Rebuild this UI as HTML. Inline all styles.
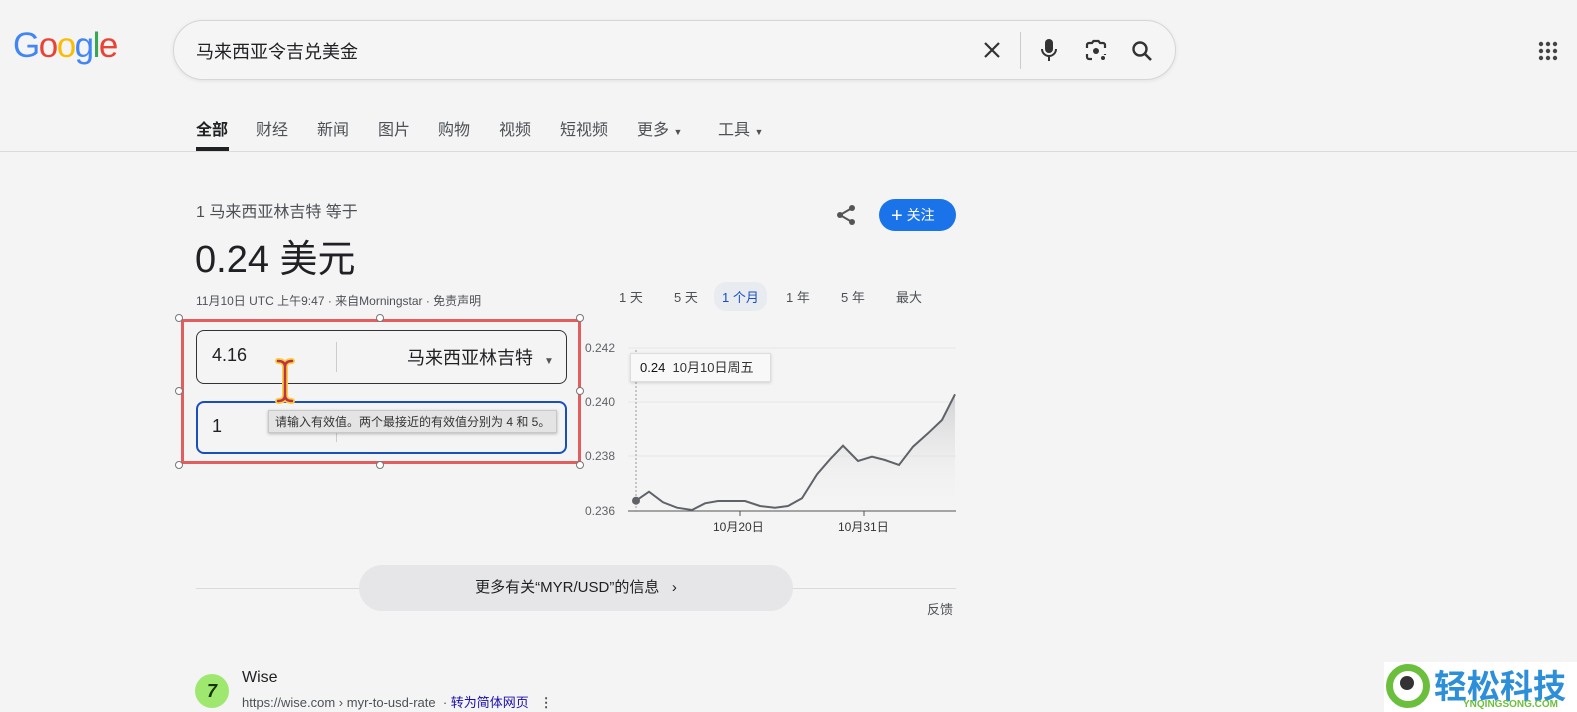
<!DOCTYPE html>
<html><head><meta charset="utf-8"><style>
*{margin:0;padding:0;box-sizing:border-box}
body{width:1577px;height:712px;background:#f4f4f4;font-family:"Liberation Sans","Noto Sans CJK SC",sans-serif;color:#202124;position:relative;overflow:hidden}
.a{position:absolute;white-space:nowrap}
</style></head><body>
<div class="a" style="left:13px;top:26px;font-size:35px;letter-spacing:-1.5px;font-weight:400"><span style="color:#4285f4">G</span><span style="color:#ea4335">o</span><span style="color:#fbbc05">o</span><span style="color:#4285f4">g</span><span style="color:#34a853">l</span><span style="color:#ea4335">e</span></div>
<div class="a" style="left:173px;top:20px;width:1003px;height:60px;border:1px solid #d6d6d6;border-radius:30px;background:#f5f5f5;box-shadow:0 1px 4px rgba(0,0,0,.08)"></div>
<div class="a" style="left:196px;top:38px;font-size:18px;color:#202124">马来西亚令吉兑美金</div>
<svg class="a" style="left:982px;top:40px" width="20" height="20" viewBox="0 0 20 20"><path d="M3 3L17 17M17 3L3 17" stroke="#333" stroke-width="2.2"/></svg>
<div class="a" style="left:1020px;top:32px;width:1px;height:37px;background:#ccc"></div>
<svg class="a" style="left:1038px;top:37px" width="22" height="26" viewBox="0 0 22 26"><rect x="7" y="2" width="8" height="14" rx="4" fill="#333"/><path d="M4 12a7 7 0 0 0 14 0M11 19v5" stroke="#333" stroke-width="2" fill="none"/></svg>
<svg class="a" style="left:1084px;top:39px" width="24" height="24" viewBox="0 0 24 24"><path d="M3 9V6a2 2 0 0 1 2-2h3l1.5-2h5L16 4h3a2 2 0 0 1 2 2v3M3 15v3a2 2 0 0 0 2 2h3M21 15v1" stroke="#333" stroke-width="2.2" fill="none"/><circle cx="12" cy="12" r="3" fill="#333"/><circle cx="19" cy="19" r="2" fill="#333"/></svg>
<svg class="a" style="left:1130px;top:39px" width="24" height="24" viewBox="0 0 24 24"><circle cx="10" cy="10" r="6.5" stroke="#333" stroke-width="2.4" fill="none"/><path d="M15 15l6 6" stroke="#333" stroke-width="2.6"/></svg>
<svg class="a" style="left:1538px;top:41px" width="20" height="20" viewBox="0 0 20 20" fill="#444"><circle cx="3" cy="3" r="2.2"/><circle cx="10" cy="3" r="2.2"/><circle cx="17" cy="3" r="2.2"/><circle cx="3" cy="10" r="2.2"/><circle cx="10" cy="10" r="2.2"/><circle cx="17" cy="10" r="2.2"/><circle cx="3" cy="17" r="2.2"/><circle cx="10" cy="17" r="2.2"/><circle cx="17" cy="17" r="2.2"/></svg>
<div class="a" style="top:116px;left:196px;font-size:16px;color:#4d5156">
<span style="color:#202124;font-weight:bold;position:absolute;left:0">全部</span>
<span style="position:absolute;left:60px">财经</span><span style="position:absolute;left:121px">新闻</span><span style="position:absolute;left:182px">图片</span><span style="position:absolute;left:242px">购物</span><span style="position:absolute;left:303px">视频</span><span style="position:absolute;left:364px">短视频</span><span style="position:absolute;left:441px">更多 <small style="font-size:9px">▼</small></span><span style="position:absolute;left:522px">工具 <small style="font-size:9px">▼</small></span></div>
<div class="a" style="left:196px;top:147px;width:33px;height:4px;background:#202124"></div>
<div class="a" style="left:0;top:151px;width:1577px;height:1px;background:#dadada"></div>
<div class="a" style="left:196px;top:198px;font-size:16px;color:#4d5156">1 马来西亚林吉特 等于</div>
<div class="a" style="left:195px;top:228px;font-size:38px;color:#202124">0.24 美元</div>
<div class="a" style="left:196px;top:292px;font-size:12px;color:#4d5156">11月10日 UTC 上午9:47 · 来自Morningstar · 免责声明</div>
<svg class="a" style="left:834px;top:203px" width="24" height="24" viewBox="0 0 24 24" fill="#555"><circle cx="18" cy="5" r="3"/><circle cx="6" cy="12" r="3"/><circle cx="18" cy="19" r="3"/><path d="M6 12L18 5M6 12l12 7" stroke="#555" stroke-width="2"/></svg>
<div class="a" style="left:879px;top:199px;width:77px;height:32px;border-radius:16px;background:#1a73e8;color:#fff;font-size:14px;line-height:32px;padding-left:12px"><b style="font-size:20px;font-weight:400;vertical-align:-2px">+</b> 关注</div>
<div class="a" style="left:181px;top:319px;width:400px;height:145px;border:3px solid #e25d5d"></div>
<div class="a" style="left:196px;top:330px;width:371px;height:54px;border:1px solid #333;border-radius:8px"></div>
<div class="a" style="left:212px;top:345px;font-size:18px">4.16</div>
<div class="a" style="left:336px;top:342px;width:1px;height:30px;background:#ccc"></div>
<div class="a" style="left:407px;top:344px;font-size:18px">马来西亚林吉特 <span style="font-size:10px;color:#555;margin-left:6px">▼</span></div>
<div class="a" style="left:196px;top:401px;width:371px;height:53px;border:2px solid #1a4fba;border-radius:8px"></div>
<div class="a" style="left:212px;top:416px;font-size:18px">1</div>
<div class="a" style="left:336px;top:412px;width:1px;height:30px;background:#ccc"></div>
<div class="a" style="left:268px;top:410px;height:23px;padding:0 6px;background:#e4e4e4;border:1px solid #c8c8c8;box-shadow:0 1px 3px rgba(0,0,0,.25);font-size:12px;line-height:22px;color:#333">请输入有效值。两个最接近的有效值分别为 4 和 5。</div>
<svg class="a" style="left:274px;top:357px" width="22" height="48" viewBox="0 0 22 48"><path d="M4 4Q11 4 11 10V38Q11 44 4 44M18 4Q11 4 11 10M11 38Q11 44 18 44" stroke="#f5d040" stroke-width="6" fill="none" stroke-linecap="round"/><path d="M4 4Q11 4 11 10V38Q11 44 4 44M18 4Q11 4 11 10M11 38Q11 44 18 44" stroke="#c0304a" stroke-width="2.5" fill="none" stroke-linecap="round"/></svg>
<svg class="a" style="left:175px;top:313px" width="412" height="158"><g fill="#fff" stroke="#777"><circle cx="4" cy="5" r="3.5"/><circle cx="205" cy="5" r="3.5"/><circle cx="405" cy="5" r="3.5"/><circle cx="4" cy="78" r="3.5"/><circle cx="405" cy="78" r="3.5"/><circle cx="4" cy="152" r="3.5"/><circle cx="205" cy="152" r="3.5"/><circle cx="405" cy="152" r="3.5"/></g></svg>
<div class="a" style="top:287px;left:619px;font-size:13px;color:#4d5156">
<span style="position:absolute;left:0">1 天</span><span style="position:absolute;left:55px">5 天</span><span style="position:absolute;left:95px;top:-5px;padding:5px 8px;border-radius:12px;background:#e8ebf0;color:#1a4fba">1 个月</span><span style="position:absolute;left:167px">1 年</span><span style="position:absolute;left:222px">5 年</span><span style="position:absolute;left:277px">最大</span></div>
<svg class="a" style="left:580px;top:330px" width="380" height="210" viewBox="580 330 380 210">
<defs><linearGradient id="g" x1="0" y1="0" x2="0" y2="1"><stop offset="0" stop-color="#c8c8cc"/><stop offset="1" stop-color="#f4f4f4" stop-opacity="0"/></linearGradient></defs>
<g stroke="#e6e6e6"><line x1="628" y1="348" x2="956" y2="348"/><line x1="628" y1="402" x2="956" y2="402"/><line x1="628" y1="456" x2="956" y2="456"/></g>
<line x1="628" y1="511" x2="956" y2="511" stroke="#555"/>
<line x1="740" y1="511" x2="740" y2="516" stroke="#555"/><line x1="864" y1="511" x2="864" y2="516" stroke="#555"/>
<line x1="636" y1="350" x2="636" y2="512" stroke="#999" stroke-dasharray="2,2"/>
<path d="M636 500.7L649 491.7L663 502.3L677 507.7L692 510L705 503.3L718 501L745 501L760 506L775 507.7L788 506L802 498.3L817 474.3L830 459.3L843 445.7L858 461L872 456.7L885 460L899 465L913 446.7L928 433.3L942 420L955 394.3L955 511L817 511Z" fill="url(#g)" opacity=".8"/>
<path d="M636 500.7L649 491.7L663 502.3L677 507.7L692 510L705 503.3L718 501L745 501L760 506L775 507.7L788 506L802 498.3L817 474.3L830 459.3L843 445.7L858 461L872 456.7L885 460L899 465L913 446.7L928 433.3L942 420L955 394.3" stroke="#5f6368" stroke-width="2" fill="none"/>
<circle cx="636" cy="500.7" r="4" fill="#5f6368"/>
<g font-size="12" fill="#5f6368" font-family="Liberation Sans,Noto Sans CJK SC,sans-serif"><text x="585" y="352">0.242</text><text x="585" y="406">0.240</text><text x="585" y="460">0.238</text><text x="585" y="515">0.236</text><text x="713" y="531" fill="#333">10月20日</text><text x="838" y="531" fill="#333">10月31日</text></g>
</svg>
<div class="a" style="left:630px;top:353px;width:141px;height:29px;background:#f8f8f8;border:1px solid #ddd;box-shadow:0 1px 3px rgba(0,0,0,.15);font-size:13px;line-height:27px;padding-left:9px;color:#333"><span style="color:#111">0.24</span>&nbsp; 10月10日周五</div>
<div class="a" style="left:196px;top:588px;width:760px;height:1px;background:#dadada"></div>
<div class="a" style="left:359px;top:565px;width:434px;height:46px;border-radius:23px;background:#e6e6e8;text-align:center;line-height:46px;font-size:15px;color:#202124">更多有关“MYR/USD”的信息 &nbsp;&nbsp;›</div>
<div class="a" style="left:927px;top:599px;font-size:13px;color:#4d5156">反馈</div>
<div class="a" style="left:195px;top:674px;width:34px;height:34px;border-radius:50%;background:#9fe870;text-align:center;line-height:34px;font-weight:bold;font-style:italic;font-size:18px;color:#163300">7</div>
<div class="a" style="left:242px;top:669px;font-size:16px;color:#202124">Wise</div>
<div class="a" style="left:242px;top:692px;font-size:13px;color:#4d5156">https://wise.com › myr-to-usd-rate &nbsp;· <span style="color:#1a0dab">转为简体网页</span> &nbsp;&nbsp;<b>⋮</b></div>
<div class="a" style="left:1384px;top:662px;width:193px;height:50px;background:#fff"></div>
<div class="a" style="left:1386px;top:664px;width:44px;height:44px;border-radius:50%;border:7px solid #6cbf3c;background:#fff"></div>
<div class="a" style="left:1400px;top:676px;width:14px;height:14px;border-radius:50%;background:#333"></div>
<div class="a" style="left:1434px;top:660px;font-size:33px;font-weight:bold;color:#2c8fd8;letter-spacing:0">轻松科技</div>
<div class="a" style="left:1463px;top:699px;font-size:10px;font-weight:bold;color:#6cbf3c">YNQINGSONG.COM</div>
</body></html>
